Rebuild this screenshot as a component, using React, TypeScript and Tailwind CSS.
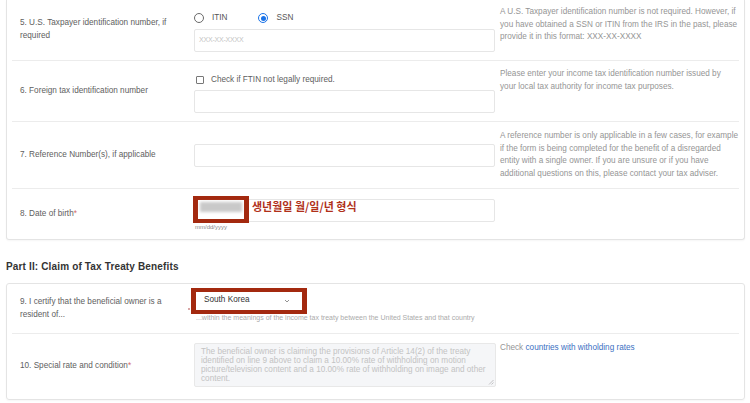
import React from "react";

const font = "font-['Liberation_Sans','Noto_Sans_CJK_KR',Arial,sans-serif]";

function Label({ children }: { children: React.ReactNode }) {
  return (
    <div className="w-[182px] shrink-0 self-center pl-[8px] pr-[10px] text-[8.2px] leading-[12.6px] text-[#5e5e5e]">
      {children}
    </div>
  );
}

function Help({ lines, className = "" }: { lines: string[]; className?: string }) {
  return (
    <div className={`ml-[5px] flex-1 text-[8.2px] leading-[12.6px] text-[#959595] ${className}`}>
      {lines.map((l, i) => (
        <div key={i} className="whitespace-nowrap">
          {l}
        </div>
      ))}
    </div>
  );
}

function Input({ children, className = "" }: { children?: React.ReactNode; className?: string }) {
  return (
    <div
      className={`relative flex h-[23px] w-[301px] items-center rounded-[2px] border border-[#e6e6e6] bg-white ${className}`}
    >
      {children}
    </div>
  );
}

const Req = () => <span className="text-[#d46a6a]">*</span>;

export default function App() {
  return (
    <div className={`h-[403px] w-[750px] overflow-hidden bg-white ${font}`}>
      {/* Card 1 */}
      <div className="ml-[6px] w-[739px] rounded-b-[3px] border-x border-b border-[#e4e4e4] px-[5px] shadow-[0_1px_2px_rgba(0,0,0,0.04)]">
        {/* Row 5 */}
        <div className="flex h-[61px] border-b border-[#ececec]">
          <Label>5. U.S. Taxpayer identification number, if required</Label>
          <div className="w-[301px] shrink-0 pt-[12px]">
            <div className="flex h-[12px] items-center text-[8.2px] text-[#555]">
              <span className="h-[10px] w-[10px] rounded-full border border-[#6a6a6a] bg-white" />
              <span className="ml-[8px]">ITIN</span>
              <span className="ml-[31px] flex h-[10px] w-[10px] items-center justify-center rounded-full border border-[#1a73e8] bg-white">
                <span className="h-[5px] w-[5px] rounded-full bg-[#1a73e8]" />
              </span>
              <span className="ml-[8px]">SSN</span>
            </div>
            <Input className="mt-[5px]">
              <span className="pl-[4px] text-[7px] tracking-[-0.2px] text-[#c4c4c4]">XXX-XX-XXXX</span>
            </Input>
          </div>
          <Help
            className="pt-[6px]"
            lines={[
              "A U.S. Taxpayer identification number is not required. However, if",
              "you have obtained a SSN or ITIN from the IRS in the past, please",
              "provide it in this format: XXX-XX-XXXX",
            ]}
          />
        </div>

        {/* Row 6 */}
        <div className="flex h-[61px] border-b border-[#ececec]">
          <Label>6. Foreign tax identification number</Label>
          <div className="w-[301px] shrink-0 pt-[13px]">
            <div className="flex h-[12px] items-center text-[8.2px] text-[#5e5e5e]">
              <span className="ml-[2px] h-[8px] w-[8px] rounded-[1px] border border-[#777] bg-white" />
              <span className="ml-[7px]">Check if FTIN not legally required.</span>
            </div>
            <Input className="mt-[4px]" />
          </div>
          <Help
            className="pt-[7px]"
            lines={[
              "Please enter your income tax identification number issued by",
              "your local tax authority for income tax purposes.",
            ]}
          />
        </div>

        {/* Row 7 */}
        <div className="flex h-[67px] border-b border-[#ececec]">
          <Label>7. Reference Number(s), if applicable</Label>
          <div className="flex w-[301px] shrink-0 items-center">
            <Input />
          </div>
          <Help
            className="pt-[8px]"
            lines={[
              "A reference number is only applicable in a few cases, for example",
              "if the form is being completed for the benefit of a disregarded",
              "entity with a single owner. If you are unsure or if you have",
              "additional questions on this, please contact your tax adviser.",
            ]}
          />
        </div>

        {/* Row 8 */}
        <div className="flex h-[50px]">
          <Label>
            8. Date of birth<Req />
          </Label>
          <div className="w-[301px] shrink-0 pt-[10px]">
            <Input className="h-[22px]">
              <div className="absolute left-[-2px] top-[-4px] h-[27px] w-[56px] border-x-[5px] border-y-[4px] border-[#a3290f] bg-white">
                <div className="ml-[2px] mt-[2px] h-[10px] w-[42px] bg-[#c9c9c9] blur-[1.5px]" />
              </div>
              <span className="absolute left-[57px] top-[-1px] whitespace-nowrap text-[11px] font-bold leading-[14px] text-[#b0301a] font-['Noto_Sans_CJK_KR',sans-serif]">
                생년월일 월/일/년 형식
              </span>
            </Input>
            <div className="mt-[1px] pl-[1px] text-[6px] leading-[8px] text-[#888]">mm/dd/yyyy</div>
          </div>
          <div className="flex-1" />
        </div>
      </div>

      {/* Heading */}
      <div className="ml-[6px] mt-[21px] text-[10px] font-bold leading-[12px] tracking-[0.15px] text-[#333]">
        Part II: Claim of Tax Treaty Benefits
      </div>

      {/* Card 2 */}
      <div className="ml-[6px] mt-[10px] w-[739px] rounded-[3px] border border-[#e4e4e4] px-[5px] shadow-[0_1px_2px_rgba(0,0,0,0.04)]">
        {/* Row 9 */}
        <div className="flex h-[50px] border-b border-[#ececec]">
          <div className="flex w-[182px] shrink-0 items-center justify-between pl-[8px] pr-[4px]">
            <div className="w-[165px] text-[8.2px] leading-[12.6px] text-[#5e5e5e]">
              9. I certify that the beneficial owner is a resident of...
            </div>
            <span className="mt-[1px] h-[2px] w-[2px] rounded-full bg-[#c88]" />
          </div>
          <div className="w-[301px] shrink-0 pt-[8px]">
            <div className="relative flex h-[17px] w-[110px] items-center justify-between rounded-[2px] bg-white pl-[10px] pr-[14px]">
              <div className="absolute left-[-3px] top-[-4px] h-[26px] w-[116px] border-x-[5px] border-y-[4px] border-[#a3290f]" />
              <span className="text-[8.2px] text-[#333]">South Korea</span>
              <svg width="6" height="4" viewBox="0 0 6 4" className="mt-[1px]">
                <path d="M1 1 L3 3 L5 1" fill="none" stroke="#888" strokeWidth="0.9" />
              </svg>
            </div>
            <div className="mt-[5px] whitespace-nowrap pl-[2px] text-[7px] leading-[8px] text-[#ababab]">
              ...within the meanings of the income tax treaty between the United States and that country
            </div>
          </div>
          <div className="flex-1" />
        </div>

        {/* Row 10 */}
        <div className="flex h-[65px]">
          <Label>
            10. Special rate and condition<Req />
          </Label>
          <div className="w-[301px] shrink-0 pt-[9px]">
            <div className="relative h-[44px] w-[302px] rounded-[2px] border border-[#e8e8e8] bg-[#f5f6f8] pl-[6px] pt-[3px] text-[8.2px] leading-[9px] text-[#c3c3c3]">
              <div className="whitespace-nowrap">
                The beneficial owner is claiming the provisions of Article 14(2) of the treaty
              </div>
              <div className="whitespace-nowrap">
                identified on line 9 above to claim a 10.00% rate of withholding on motion
              </div>
              <div className="whitespace-nowrap">
                picture/television content and a 10.00% rate of withholding on image and other
              </div>
              <div className="whitespace-nowrap">content.</div>
              <svg width="6" height="6" viewBox="0 0 6 6" className="absolute bottom-[1px] right-[1px]">
                <path d="M5.5 1 L1 5.5 M5.5 3.5 L3.5 5.5" stroke="#b5b5b5" strokeWidth="0.8" />
              </svg>
            </div>
          </div>
          <div className="ml-[5px] flex-1 pt-[8px] text-[8.2px] leading-[12.6px] text-[#959595]">
            Check <span className="text-[#3b6fc2]">countries with witholding rates</span>
          </div>
        </div>
      </div>
    </div>
  );
}
